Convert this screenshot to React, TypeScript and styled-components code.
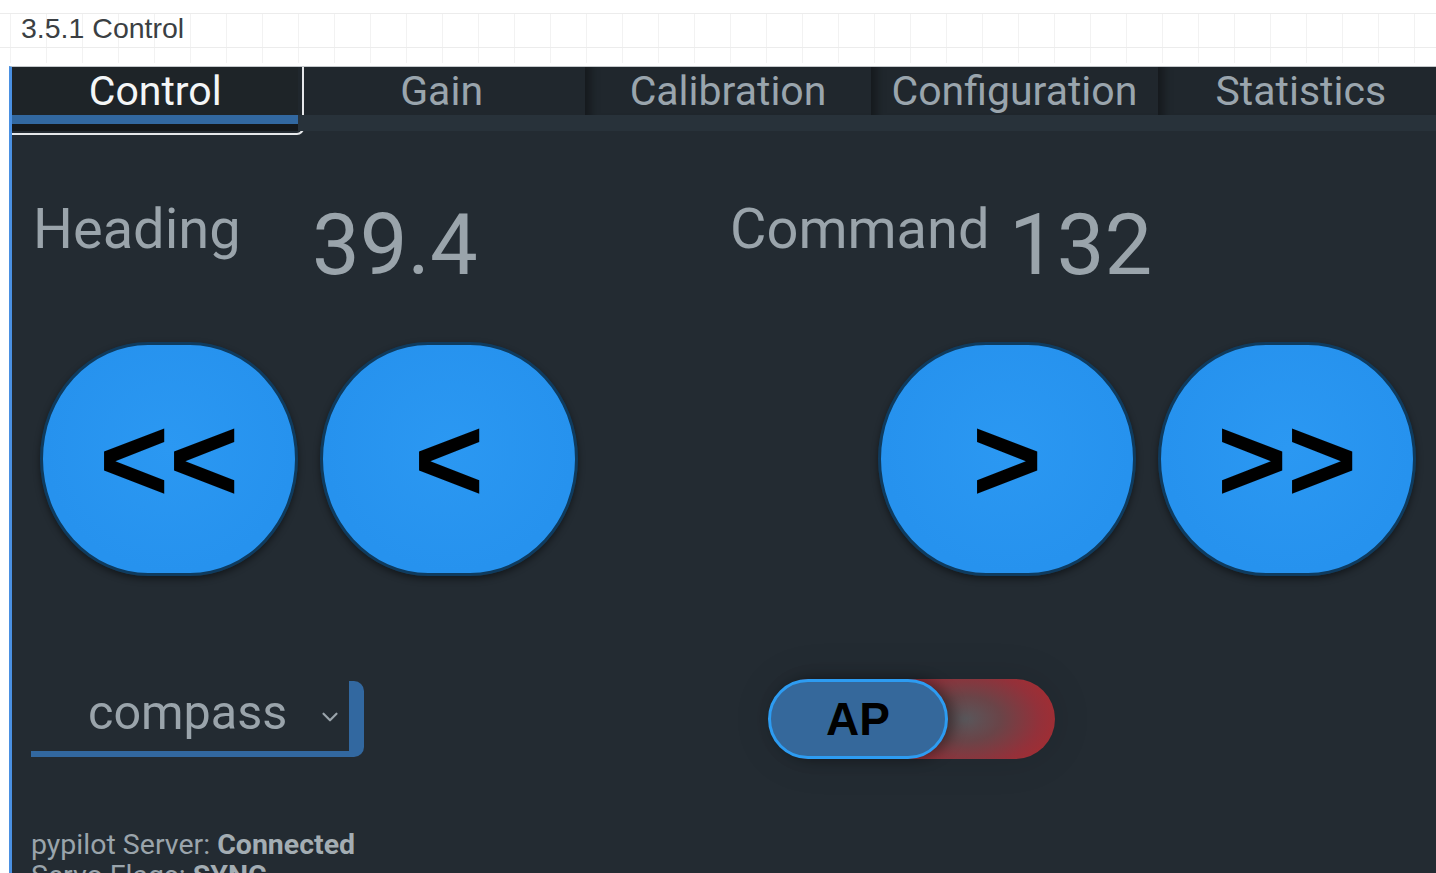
import React from 'react'
import styled, {createGlobalStyle} from 'styled-components'
import {ChevronDown} from 'lucide-react'

const GlobalStyle = createGlobalStyle`
  html, body {
    margin: 0;
    padding: 0;
    background: #fff;
    overflow: hidden;
  }

  body {
    width: 1436px;
    height: 873px;
  }
`

const TABS = ['Control', 'Gain', 'Calibration', 'Configuration', 'Statistics']

const Page = styled.div`
  width: 1436px;
  height: 873px;
  overflow: hidden;
`

const DocHeader = styled.header`
  height: 66px;
  box-sizing: border-box;
  padding: 11px 0 0 21px;
  background-image:
    linear-gradient(to bottom, transparent 13px, #ececec 13px 14px, transparent 14px 47px, #ececec 47px 48px, transparent 48px),
    repeating-linear-gradient(to right, #f2f2f2 0 1px, transparent 1px 36px);
  background-size: 100% 100%, 100% 50px;
  background-position: 0 0, 10px 13px;
  background-repeat: no-repeat;
  font-family: "Liberation Sans", Arial, sans-serif;
  font-size: 28.5px;
  line-height: 34px;
  color: #3b3f43;
`

const Panel = styled.section`
  width: 1432px;
  height: 807px;
  margin-left: 9px;
  border-left: 3px solid #4a90e2;
  border-top: 1px solid #c4c8cb;
  background: #232b32;
  font-family: Roboto, "Noto Sans", sans-serif;
  color: #9aa4ab;
`

const TabBar = styled.nav`
  display: flex;
  background: #20272d;
`

const Tab = styled.div<{$active?: boolean}>`
  position: relative;
  flex: 1;
  display: flex;
  flex-direction: column;

  ${p => p.$active && `
    &::after {
      content: '';
      position: absolute;
      left: 0;
      top: 0;
      right: -6px;
      bottom: -4px;
      border-right: 2px solid #e6e8ea;
      border-bottom: 2px solid #e6e8ea;
      border-bottom-right-radius: 7px;
      pointer-events: none;
    }
  `}
`

const TabLabel = styled.div<{$active?: boolean; $shade?: boolean}>`
  height: 48px;
  text-align: center;
  font-size: 41px;
  line-height: 48px;
  color: ${p => (p.$active ? '#f4f6f7' : '#9aa5ad')};
  background: ${p => (p.$active ? '#1e2428' : 'transparent')};
  box-shadow: ${p => (p.$shade ? 'inset 14px 0 8px -8px rgba(0, 0, 0, 0.35)' : 'none')};
`

const TabIndicator = styled.div<{$active?: boolean}>`
  height: 16px;
  background: ${p => (p.$active ? 'linear-gradient(#3268a0 0 9px, #14181b 9px)' : '#28323a')};
`

const Readouts = styled.div`
  display: grid;
  grid-template-columns: 697px auto;
  padding: 70px 0 0 21px;
`

const Readout = styled.div`
  display: flex;
  align-items: flex-start;
`

const ReadoutLabel = styled.div`
  width: 279px;
  font-size: 56px;
  line-height: 1;
`

const ReadoutValue = styled.div`
  margin-top: 2px;
  font-size: 85px;
  line-height: 1;
`

const ButtonRow = styled.div`
  display: flex;
  justify-content: space-between;
  padding: 54px 28px 0;
`

const ButtonGroup = styled.div`
  display: flex;
  gap: 22px;
`

const SteerButton = styled.button`
  box-sizing: border-box;
  width: 258px;
  height: 234px;
  padding: 0;
  border: 3px solid #0f3b5e;
  border-radius: 108px / 117px;
  background: radial-gradient(circle at 50% 45%, #2b98f2 0%, #2692ee 70%);
  box-shadow: 0 3px 7px rgba(0, 0, 0, 0.45);
  display: flex;
  align-items: center;
  justify-content: center;
  font-family: "Liberation Sans", Arial, sans-serif;
  font-weight: bold;
  font-size: 120px;
  line-height: 1;
  color: #000;
`

const Controls = styled.div`
  display: grid;
  grid-template-columns: 739px auto;
  align-items: start;
  padding: 103px 0 0 19px;
`

const ModeSelect = styled.div`
  box-sizing: border-box;
  width: 333px;
  height: 76px;
  margin-top: 2px;
  padding: 0 6px 6px 57px;
  border-right: 15px solid #3268a0;
  border-bottom: 6px solid #3268a0;
  border-radius: 0 10px 10px 0;
  display: flex;
  align-items: center;
  justify-content: space-between;
  font-size: 48.5px;
  line-height: 1;

  svg {
    margin-top: 8px;
  }
`

const ApTrack = styled.div`
  display: flex;
  width: 285px;
  height: 80px;
  border-radius: 40px;
  background: radial-gradient(ellipse 120px 75px at 195px 50%, #59575b 0%, #6a4448 30%, #93313a 62%, #b3282a 100%);
  box-shadow: 0 0 40px rgba(0, 0, 0, 0.12);
`

const ApKnob = styled.button`
  box-sizing: border-box;
  width: 180px;
  height: 80px;
  margin-left: -2px;
  padding: 0;
  border: 3px solid #2d9cf2;
  border-radius: 40px;
  background: #35689b;
  box-shadow: 6px 0 14px rgba(0, 0, 0, 0.4);
  font-family: "Liberation Sans", Arial, sans-serif;
  font-weight: bold;
  font-size: 46px;
  line-height: 1;
  color: #000;
`

const Status = styled.div`
  padding: 70px 0 0 19px;
  font-size: 28.5px;
  line-height: 31px;

  b {
    font-weight: bold;
    color: #a3adb3;
  }
`

export default function App() {
    return (
        <Page>
            <GlobalStyle/>
            <DocHeader>3.5.1 Control</DocHeader>

            <Panel>
                <TabBar>
                    {TABS.map((name, i) => (
                        <Tab key={name} $active={i === 0}>
                            <TabLabel $active={i === 0} $shade={i > 1}>{name}</TabLabel>
                            <TabIndicator $active={i === 0}/>
                        </Tab>
                    ))}
                </TabBar>

                <Readouts>
                    <Readout>
                        <ReadoutLabel>Heading</ReadoutLabel>
                        <ReadoutValue>39.4</ReadoutValue>
                    </Readout>
                    <Readout>
                        <ReadoutLabel>Command</ReadoutLabel>
                        <ReadoutValue>132</ReadoutValue>
                    </Readout>
                </Readouts>

                <ButtonRow>
                    <ButtonGroup>
                        <SteerButton>&lt;&lt;</SteerButton>
                        <SteerButton>&lt;</SteerButton>
                    </ButtonGroup>
                    <ButtonGroup>
                        <SteerButton>&gt;</SteerButton>
                        <SteerButton>&gt;&gt;</SteerButton>
                    </ButtonGroup>
                </ButtonRow>

                <Controls>
                    <ModeSelect>
                        <span>compass</span>
                        <ChevronDown size={26} strokeWidth={2} color='#9aa4ab'/>
                    </ModeSelect>
                    <ApTrack>
                        <ApKnob>AP</ApKnob>
                    </ApTrack>
                </Controls>

                <Status>
                    <div>pypilot Server: <b>Connected</b></div>
                    <div>Servo Flags: <b>SYNC</b></div>
                </Status>
            </Panel>
        </Page>
    )
}
